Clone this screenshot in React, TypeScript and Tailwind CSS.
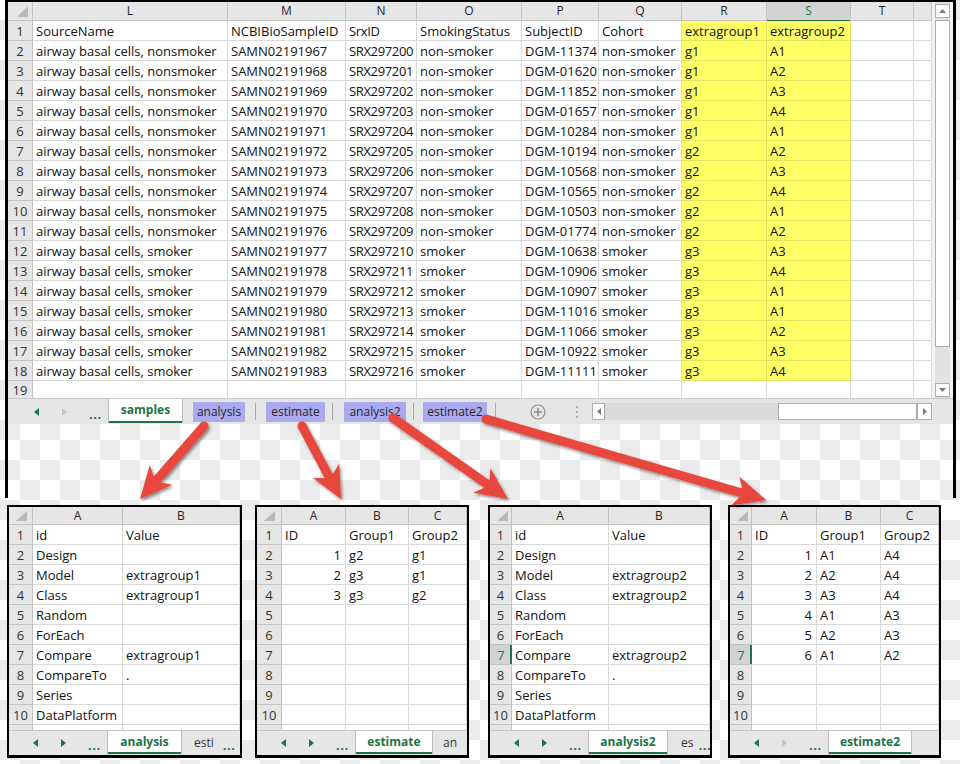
import React from "react";
import clsx from "clsx";

const topCols = [
  "w-[195px]",
  "w-[118px]",
  "w-[71px]",
  "w-[105px]",
  "w-[77px]",
  "w-[83px]",
  "w-[85px]",
  "w-[84px]",
  "w-[63px]",
  "w-[18px]",
];
const topLetters = ["L", "M", "N", "O", "P", "Q", "R", "S", "T", ""];

const subj = [
  "DGM-11374", "DGM-01620", "DGM-11852", "DGM-01657", "DGM-10284", "DGM-10194",
  "DGM-10568", "DGM-10565", "DGM-10503", "DGM-01774", "DGM-10638", "DGM-10906",
  "DGM-10907", "DGM-11016", "DGM-11066", "DGM-10922", "DGM-11111",
];
const g = ["g1", "g1", "g1", "g1", "g1", "g2", "g2", "g2", "g2", "g2", "g3", "g3", "g3", "g3", "g3", "g3", "g3"];
const a = ["A1", "A2", "A3", "A4", "A1", "A2", "A3", "A4", "A1", "A2", "A3", "A4", "A1", "A1", "A2", "A3", "A4"];

const topRows: string[][] = [
  ["SourceName", "NCBIBioSampleID", "SrxID", "SmokingStatus", "SubjectID", "Cohort", "extragroup1", "extragroup2", "", ""],
  ...subj.map((s, i) => {
    const smoker = i >= 10;
    return [
      `airway basal cells, ${smoker ? "smoker" : "nonsmoker"}`,
      `SAMN021919${67 + i}`,
      `SRX2972${String(i).padStart(2, "0")}`,
      smoker ? "smoker" : "non-smoker",
      s,
      smoker ? "smoker" : "non-smoker",
      g[i],
      a[i],
      "",
      "",
    ];
  }),
];

function CornerTri({ w, h }: { w: number; h: number }) {
  return (
    <svg width={w} height={h} className="block">
      <polygon points={`${w - 4},4 ${w - 4},${h - 3} ${w - 15},${h - 3}`} fill="#b9b9b9" />
    </svg>
  );
}

function TriL({ on }: { on: boolean }) {
  return (
    <svg width="5" height="8" className="block shrink-0">
      <polygon points="5,0 5,8 0,4" fill={on ? "#217346" : "#c4c4c4"} />
    </svg>
  );
}
function TriR({ on }: { on: boolean }) {
  return (
    <svg width="5" height="8" className="block shrink-0">
      <polygon points="0,0 0,8 5,4" fill={on ? "#217346" : "#c4c4c4"} />
    </svg>
  );
}

function Dots() {
  return <span className="font-bold text-[#217346] text-[13px] leading-none tracking-[0.5px]">...</span>;
}

function VScroll() {
  return (
    <div className="w-[15px] shrink-0 h-full flex flex-col bg-[#e2e2e2]">
      <div className="mt-[2px] h-[14px] bg-white border border-[#acacac] flex items-center justify-center">
        <svg width="7" height="4" className="block">
          <polygon points="0,4 7,4 3.5,0" fill="#7a7a7a" />
        </svg>
      </div>
      <div className="mt-[2px] h-[327px] bg-white border border-[#acacac]" />
      <div className="flex-1" />
      <div className="h-[14px] mb-[1px] bg-white border border-[#acacac] flex items-center justify-center">
        <svg width="7" height="4" className="block">
          <polygon points="0,0 7,0 3.5,4" fill="#7a7a7a" />
        </svg>
      </div>
    </div>
  );
}

function Sep() {
  return <div className="w-px h-[17px] bg-[#a8a8a8] self-center shrink-0" />;
}

function Hl({ w, ml, children }: { w: string; ml: string; children: React.ReactNode }) {
  return (
    <span
      className={clsx(
        "h-[20px] bg-[#aaaaee] text-[12px] text-[#262626] leading-[20px] flex justify-center whitespace-nowrap",
        w,
        ml
      )}
    >
      {children}
    </span>
  );
}

function TopTabs() {
  return (
    <div className="h-[26px] shrink-0 bg-[#e6e6e6] border-t border-[#c6c6c6] flex items-start whitespace-nowrap">
      <div className="w-[100px] h-[25px] shrink-0 flex items-center">
        <div className="ml-[26px]">
          <TriL on />
        </div>
        <div className="ml-[23px]">
          <TriR on={false} />
        </div>
        <div className="ml-[22px] mt-[2px]">
          <Dots />
        </div>
      </div>
      <div className="w-[75px] h-[24px] shrink-0 bg-white border-l border-r border-[#bdbdbd] flex flex-col">
        <div className="flex-1 flex items-center justify-center font-bold text-[#217346] text-[12px]">samples</div>
        <div className="h-[2px] bg-[#217346]" />
      </div>
      <div className="h-[25px] flex items-center">
        <div className="w-[72px] h-full flex items-center">
          <Hl w="w-[52px]" ml="ml-[10px]">analysis</Hl>
        </div>
        <Sep />
        <div className="w-[76px] h-full flex items-center">
          <Hl w="w-[59px]" ml="ml-[10px]">estimate</Hl>
        </div>
        <Sep />
        <div className="w-[80px] h-full flex items-center">
          <Hl w="w-[62px]" ml="ml-[11px]">analysis2</Hl>
        </div>
        <Sep />
        <div className="w-[81px] h-full flex items-center">
          <Hl w="w-[64px]" ml="ml-[9px]">estimate2</Hl>
        </div>
        <Sep />
        <div className="ml-[34px]">
          <svg width="16" height="16" className="block">
            <circle cx="8" cy="8" r="7" fill="none" stroke="#8c8c8c" strokeWidth="1.2" />
            <line x1="8" y1="4" x2="8" y2="12" stroke="#8c8c8c" strokeWidth="1.6" />
            <line x1="4" y1="8" x2="12" y2="8" stroke="#8c8c8c" strokeWidth="1.6" />
          </svg>
        </div>
        <div className="ml-[30px]">
          <svg width="2" height="12" className="block">
            <rect x="0" y="0" width="2" height="2" fill="#b0b0b0" />
            <rect x="0" y="5" width="2" height="2" fill="#b0b0b0" />
            <rect x="0" y="10" width="2" height="2" fill="#b0b0b0" />
          </svg>
        </div>
        <div className="ml-[14px] w-[340px] h-[17px] flex bg-[#dadada]">
          <div className="w-[13px] h-full bg-white border border-[#acacac] flex items-center justify-center">
            <svg width="4" height="7" className="block">
              <polygon points="4,0 4,7 0,3.5" fill="#7a7a7a" />
            </svg>
          </div>
          <div className="w-[173px]" />
          <div className="w-[139px] h-full bg-white border border-[#acacac]" />
          <div className="w-[15px] h-full bg-white border border-[#acacac] flex items-center justify-center">
            <svg width="4" height="7" className="block">
              <polygon points="0,0 0,7 4,3.5" fill="#7a7a7a" />
            </svg>
          </div>
        </div>
      </div>
    </div>
  );
}

function TopSheet() {
  return (
    <div className="ml-[5px] w-[951px] h-[498px] border-l-[3px] border-r-[3px] border-t-2 border-black flex flex-col">
      <div className="flex h-[396px] shrink-0 bg-[#f2f2f2]">
        <div className="w-[924px] shrink-0 flex flex-col bg-white">
          <div className="flex h-[19px] shrink-0">
            <div className="w-[25px] shrink-0 bg-[#e6e6e6] border-r border-b border-[#c2c2c2]">
              <CornerTri w={24} h={18} />
            </div>
            {topLetters.map((L, i) =>
              i === 7 ? (
                <div key={i} className={clsx(topCols[i], "shrink-0 flex flex-col bg-[#d3d3d3] border-r border-[#c2c2c2]")}>
                  <div className="flex-1 flex items-center justify-center text-[12px] text-[#217346]">{L}</div>
                  <div className="h-[2px] bg-[#217346]" />
                </div>
              ) : (
                <div
                  key={i}
                  className={clsx(
                    topCols[i],
                    "shrink-0 bg-[#e6e6e6] border-r border-b border-[#c2c2c2] flex items-center justify-center text-[12px] text-[#262626]"
                  )}
                >
                  {L}
                </div>
              )
            )}
          </div>
          {topRows.map((row, r) => (
            <div key={r} className="flex h-[20px] shrink-0">
              <div className="w-[25px] shrink-0 bg-[#e6e6e6] border-r border-b border-[#c2c2c2] flex justify-center text-[13px] leading-[20px] text-[#333]">
                {r + 1}
              </div>
              {row.map((v, c) => (
                <div
                  key={c}
                  className={clsx(
                    topCols[c],
                    "shrink-0 border-r border-b pl-[3px] text-[13px] leading-[20px] whitespace-nowrap text-[#111]",
                    c === 2 && "tracking-[-0.35px]",
                    c === 6 || c === 7 ? "bg-[#ffff66] border-[#e4e45e]" : "border-[#d9d9d9]"
                  )}
                >
                  {v}
                </div>
              ))}
            </div>
          ))}
          <div className="flex h-[17px] shrink-0">
            <div className="w-[25px] shrink-0 bg-[#e6e6e6] border-r border-[#c2c2c2] flex justify-center text-[13px] leading-[18px] text-[#333]">
              19
            </div>
            {topCols.map((w, c) => (
              <div key={c} className={clsx(w, "shrink-0 border-r border-[#d9d9d9]")} />
            ))}
          </div>
        </div>
        <div className="w-[3px] shrink-0" />
        <VScroll />
        <div className="flex-1" />
      </div>
      <TopTabs />
    </div>
  );
}

type MiniProps = {
  wrap: string;
  rn: string;
  cols: string[];
  letters: string[];
  rows: string[][];
  selRow?: number;
  tabW: string;
  tab: string;
  rightOn: boolean;
  extra?: React.ReactNode;
};

function Mini({ wrap, rn, cols, letters, rows, selRow, tabW, tab, rightOn, extra }: MiniProps) {
  return (
    <div className={clsx("h-[253px] shrink-0 border-2 border-b-[3px] border-black bg-white flex flex-col", wrap)}>
      <div className="flex h-[18px] shrink-0">
        <div className={clsx(rn, "shrink-0 bg-[#e6e6e6] border-r border-b border-[#c2c2c2]")}>
          <CornerTri w={22} h={17} />
        </div>
        {letters.map((L, i) => (
          <div
            key={i}
            className={clsx(
              cols[i],
              "shrink-0 bg-[#e6e6e6] border-r border-b border-[#c2c2c2] flex items-center justify-center text-[12px] text-[#262626]"
            )}
          >
            {L}
          </div>
        ))}
      </div>
      {rows.map((row, r) => (
        <div key={r} className="flex h-[20px] shrink-0">
          {selRow === r + 1 ? (
            <div className={clsx(rn, "relative shrink-0 bg-[#d3d3d3] border-b border-[#c2c2c2] flex justify-center text-[13px] leading-[20px] text-[#217346]")}>
              {r + 1}
              <div className="absolute right-0 top-0 bottom-0 w-[2px] bg-[#217346]" />
            </div>
          ) : (
            <div className={clsx(rn, "shrink-0 bg-[#e6e6e6] border-r border-b border-[#c2c2c2] flex justify-center text-[13px] leading-[20px] text-[#333]")}>
              {r + 1}
            </div>
          )}
          {cols.map((w, c) => {
            const v = row[c] ?? "";
            const num = /^\d+$/.test(v);
            return (
              <div
                key={c}
                className={clsx(
                  w,
                  "shrink-0 border-r border-b border-[#d9d9d9] text-[13px] leading-[20px] whitespace-nowrap text-[#111]",
                  num ? "text-right pr-[4px]" : "pl-[3px]"
                )}
              >
                {v}
              </div>
            );
          })}
        </div>
      ))}
      <div className="flex h-[5px] shrink-0">
        <div className={clsx(rn, "shrink-0 bg-[#e6e6e6] border-r border-[#c2c2c2]")} />
        {cols.map((w, c) => (
          <div key={c} className={clsx(w, "shrink-0 border-r border-[#d9d9d9]")} />
        ))}
      </div>
      <div className="h-[25px] shrink-0 bg-[#e6e6e6] border-t border-[#c6c6c6] flex items-start whitespace-nowrap overflow-hidden">
        <div className="w-[98px] h-[24px] shrink-0 flex items-center">
          <div className="ml-[24px]">
            <TriL on />
          </div>
          <div className="ml-[23px]">
            <TriR on={rightOn} />
          </div>
          <div className="ml-[22px] mt-[2px]">
            <Dots />
          </div>
        </div>
        <div className={clsx(tabW, "h-[23px] shrink-0 bg-white border-l border-r border-[#bdbdbd] flex flex-col")}>
          <div className="flex-1 flex items-center justify-center font-bold text-[#217346] text-[12px]">{tab}</div>
          <div className="h-[2px] bg-[#217346]" />
        </div>
        {extra}
      </div>
    </div>
  );
}

const analysisRows = (v: string) => [
  ["id", "Value"],
  ["Design", ""],
  ["Model", v],
  ["Class", v],
  ["Random", ""],
  ["ForEach", ""],
  ["Compare", v],
  ["CompareTo", "."],
  ["Series", ""],
  ["DataPlatform", ""],
];

const est1 = [
  ["ID", "Group1", "Group2"],
  ["1", "g2", "g1"],
  ["2", "g3", "g1"],
  ["3", "g3", "g2"],
  [],
  [],
  [],
  [],
  [],
  [],
];
const est2 = [
  ["ID", "Group1", "Group2"],
  ["1", "A1", "A4"],
  ["2", "A2", "A4"],
  ["3", "A3", "A4"],
  ["4", "A1", "A3"],
  ["5", "A2", "A3"],
  ["6", "A1", "A2"],
  [],
  [],
  [],
];

function Arrow({ x1, y1, x2, y2 }: { x1: number; y1: number; x2: number; y2: number }) {
  const dx = x2 - x1;
  const dy = y2 - y1;
  const L = Math.hypot(dx, dy);
  const ux = dx / L;
  const uy = dy / L;
  const px = -uy;
  const py = ux;
  const s = 4.5;
  const hl = 30;
  const hw = 15;
  const bx = x2 - ux * hl;
  const by = y2 - uy * hl;
  const j = 4;
  const pts = [
    [x1 + px * s, y1 + py * s],
    [bx + ux * j + px * s, by + uy * j + py * s],
    [bx - ux * 2 + px * hw, by - uy * 2 + py * hw],
    [x2, y2],
    [bx - ux * 2 - px * hw, by - uy * 2 - py * hw],
    [bx + ux * j - px * s, by + uy * j - py * s],
    [x1 - px * s, y1 - py * s],
  ]
    .map((p) => `${p[0].toFixed(1)},${p[1].toFixed(1)}`)
    .join(" ");
  return (
    <g>
      <polygon points={pts} />
      <circle cx={x1} cy={y1} r={s} />
    </g>
  );
}

function Arrows() {
  return (
    <svg className="absolute left-0 top-0 pointer-events-none" width="960" height="764">
      <defs>
        <filter id="sh" x="-20%" y="-20%" width="140%" height="140%">
          <feDropShadow dx="1.5" dy="2" stdDeviation="1.6" floodColor="#000" floodOpacity="0.45" />
        </filter>
      </defs>
      <g fill="#e8473d" filter="url(#sh)">
        <Arrow x1={204} y1={426} x2={140} y2={499} />
        <Arrow x1={302} y1={426} x2={341} y2={499} />
        <Arrow x1={393} y1={418} x2={508} y2={499} />
        <Arrow x1={486} y1={419} x2={766} y2={500} />
      </g>
    </svg>
  );
}

export default function App() {
  return (
    <div className="relative w-[960px] h-[764px] overflow-hidden font-['Open_Sans',sans-serif] bg-[conic-gradient(#ebebeb_25%,#ffffff_0_50%,#ebebeb_0_75%,#ffffff_0)] bg-[length:40px_40px]">
      <TopSheet />
      <div className="flex items-start mt-[7px]">
        <Mini
          wrap="ml-[7px] w-[235px]"
          rn="w-[24px]"
          cols={["w-[90px]", "w-[117px]"]}
          letters={["A", "B"]}
          rows={analysisRows("extragroup1")}
          tabW="w-[75px]"
          tab="analysis"
          rightOn
          extra={
            <div className="h-[24px] flex items-center">
              <span className="ml-[12px] text-[12px] text-[#333]">esti</span>
              <span className="ml-[9px] mt-[2px]">
                <Dots />
              </span>
            </div>
          }
        />
        <Mini
          wrap="ml-[13px] w-[214px]"
          rn="w-[25px]"
          cols={["w-[64px]", "w-[63px]", "w-[58px]"]}
          letters={["A", "B", "C"]}
          rows={est1}
          tabW="w-[78px]"
          tab="estimate"
          rightOn
          extra={
            <div className="h-[24px] flex items-center">
              <span className="ml-[10px] text-[12px] text-[#333]">an</span>
            </div>
          }
        />
        <Mini
          wrap="ml-[19px] w-[224px]"
          rn="w-[22px]"
          cols={["w-[97px]", "w-[101px]"]}
          letters={["A", "B"]}
          rows={analysisRows("extragroup2")}
          selRow={7}
          tabW="w-[80px]"
          tab="analysis2"
          rightOn
          extra={
            <div className="h-[24px] flex items-center">
              <span className="ml-[13px] text-[12px] text-[#333]">es</span>
              <span className="ml-[5px] mt-[2px]">
                <Dots />
              </span>
            </div>
          }
        />
        <Mini
          wrap="ml-[16px] w-[213px]"
          rn="w-[22px]"
          cols={["w-[65px]", "w-[64px]", "w-[58px]"]}
          letters={["A", "B", "C"]}
          rows={est2}
          selRow={7}
          tabW="w-[84px]"
          tab="estimate2"
          rightOn={false}
        />
      </div>
      <Arrows />
    </div>
  );
}
